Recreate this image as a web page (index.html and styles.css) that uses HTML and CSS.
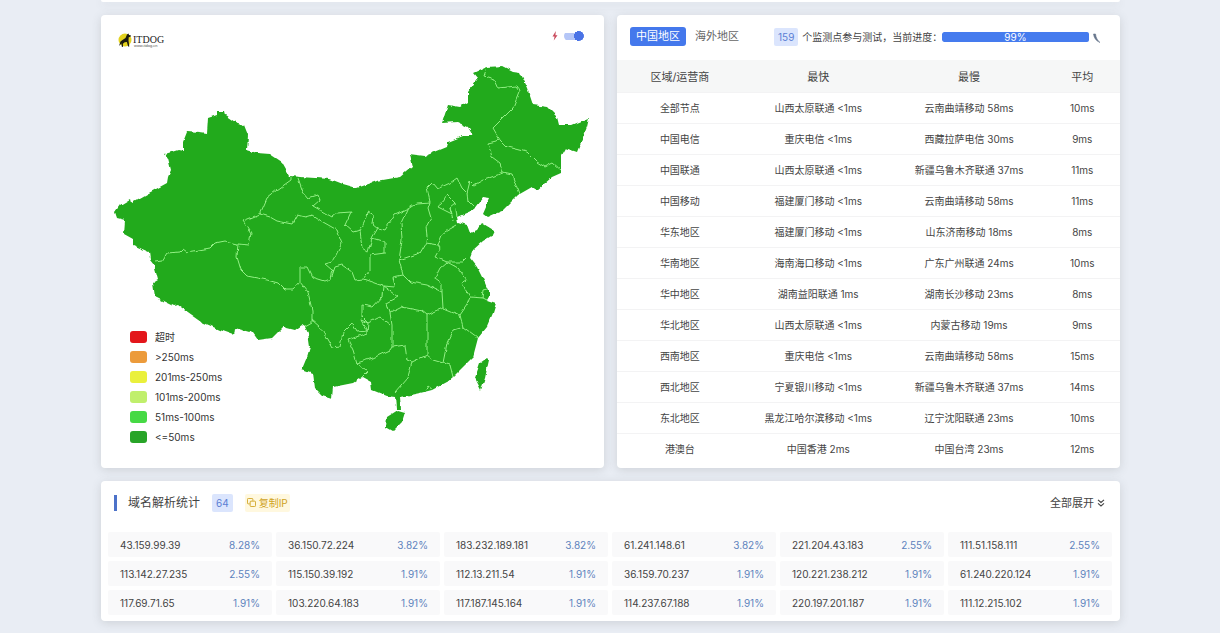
FILE: index.html
```html
<!DOCTYPE html>
<html lang="zh-CN">
<head>
<meta charset="utf-8">
<title>ITDOG</title>
<link rel="stylesheet" href="styles.css">
</head>
<body>
<main class="page">
  <section class="card card-prev"></section>

  <div class="columns">
    <section class="card map-card">
      <svg class="map" viewBox="101 15 503 453" role="img" aria-label="中国地图">
        <defs>
          <filter id="rough" x="-5%" y="-5%" width="110%" height="110%">
            <feTurbulence type="fractalNoise" baseFrequency="0.13" numOctaves="2" seed="4" result="n"/>
            <feDisplacementMap in="SourceGraphic" in2="n" scale="4" xChannelSelector="R" yChannelSelector="G"/>
          </filter>
        </defs>
        <g filter="url(#rough)">
          <path class="land" d="M115 212L120 205L130 199L131 203L147 194L167 183L168 177L171 170L168 158L165 154L178 150L183 151L183 142L187 132L200 133L207 134L208 118L217 115L217 111L224 111L225 115L235 122L244 125L248 135L247 150L257 153L270 154L282 162L290 176L300 177L330 179L343 184L357 188L377 181L400 177L412 167L409 154L425 156L447 147L448 142L463 136L473 136L468 127L457 122L442 123L448 105L460 107L468 102L468 92L478 78L474 73L487 67L503 66L513 71L520 72L527 87L533 105L547 107L557 117L559 125L572 125L589 118L587 127L577 152L565 148L561 155L561 173L552 177L537 190L532 187L518 195L503 210L498 212L487 217L483 214L490 198L483 197L473 210L457 217L458 222L467 225L470 233L477 230L482 223L495 231L493 235L483 241L473 250L470 258L477 267L485 283L490 295L487 300L496 303L493 313L487 327L478 338L473 357L453 377L447 382L432 390L420 393L400 397L401 409L396 409L395 397L387 396L372 390L371 382L362 377L353 383L333 387L332 398L322 395L315 388L313 373L302 369L307 357L310 347L308 333L305 327L302 325L295 330L283 327L272 338L258 340L253 333L235 328L234 335L220 330L202 322L178 305L173 306L155 297L153 283L158 280L154 265L150 260L149 252L133 245L133 239L124 234L125 220L117 218Z"/>
          <path class="land" d="M405 412L402 422L393 431L386 427L387 417L398 410Z"/>
          <path class="land" d="M487 358L489 360L485 378L481 390L475 378L480 363Z"/>
          <g class="borders">
            <path d="M155 262L162 261L167 253L180 252L183 249L187 252L210 248L215 243L225 241L238 244L237 257L241 270L247 276L267 280L278 283L285 290L293 290L300 282"/>
            <path d="M238 244L249 245L251 233L243 221L260 214L264 205L267 198L277 190L291 180L291 177"/>
            <path d="M260 214L270 217L277 221L292 224L297 215L305 217L312 215L323 222L337 230L342 243L335 257L332 262L325 264L332 270L330 279L325 281L312 277L307 267L300 267L300 282L308 292L312 310L312 323L305 327"/>
            <path d="M332 276L335 267L342 265L352 272L355 280L363 279"/>
            <path d="M298 178L303 192L308 198L318 195L320 200L313 206L332 217L337 213L351 212L345 225L353 232L360 230"/>
            <path d="M360 231L367 217L368 212L373 215L372 223L378 228L372 238L368 252L362 248Z"/>
            <path d="M372 238L385 242L385 253L370 255L370 270L363 279L383 286L395 287L393 277L403 275"/>
            <path d="M378 228L385 230L395 215L408 209L417 203L430 202M407 210L401 223L402 240L399 260L420 253L426 243L427 237L426 227L431 218L428 208L430 202"/>
            <path d="M430 202L427 188L432 183L437 189L450 183L457 178L462 188L467 193L470 181L474 185L483 180L503 173M467 193L468 202L473 207"/>
            <path d="M438 207L447 195L455 203L450 207L452 214L438 207M455 203L457 217M450 207L453 220"/>
            <path d="M457 225L443 233L438 245L426 243M438 245L440 248L435 257L447 262L463 262L468 257"/>
            <path d="M399 260L403 275L410 282L427 285L442 292M447 262L440 268L435 278L442 283L442 292L443 308"/>
            <path d="M447 262L458 268L467 280L462 283L470 297L483 298L487 300M487 289L483 290L482 298"/>
            <path d="M470 297L467 305L460 315L463 327L478 338M443 308L448 310L460 315M443 308L427 315L422 311L402 307L390 313"/>
            <path d="M383 286L398 297L387 303L390 313L392 325L392 347L405 345L407 360L412 362"/>
            <path d="M383 286L382 297L373 307L362 305L362 317L368 323L380 317L390 325"/>
            <path d="M427 315L427 327L427 347L427 355L412 362L408 378L395 393M427 355L433 360L443 363L447 343L453 330L463 327M443 363L450 365L453 377"/>
            <path d="M392 347L390 350L373 358L357 363L367 372L362 377M357 363L353 350L348 340L367 333L368 323"/>
            <path d="M312 320L320 327L332 348L340 347L343 332L352 323L357 332L367 331L361 320L368 323"/>
            <path d="M487 67L484 76L494 79L498 88L517 86L520 90L513 108L493 128L500 140L507 147L527 152L537 162L545 167L553 163L561 170"/>
            <path d="M500 140L488 143L492 157L500 163L503 173L512 175L515 183L519 194M425 391L428 386L432 389"/>
          </g>
        </g>
      </svg>

      <svg class="logo" viewBox="0 0 50 18" role="img" aria-label="ITDOG">
        <circle cx="7" cy="9" r="6.5" fill="#e3d21f"/>
        <path d="M1 15l1.500-4.500 2-1.500 3-2 1.500-3.500 1.500-1 .5 1.500 2 .5-.5 1.200-1.800.5-.2 3.300.8 6h-1.200l-1.200-4.500-2.200.2-1.800 1.500.2 3-1.200.2-.5-3.400z" fill="#1b1a10"/>
        <text class="logo-name" x="15" y="12">ITDOG</text>
        <text class="logo-sub" x="16" y="16">www.itdog.cn</text>
      </svg>

      <label class="switch" aria-label="快速模式">
        <svg class="bolt" viewBox="0 0 8 12"><path d="M5 0L1 6.500h2.500L2.500 11.500 7 5H4.500z" fill="#c94a5c"/></svg>
        <input class="switch-input" type="checkbox" checked>
      </label>

      <ul class="legend">
        <li><span class="swatch c-timeout"></span>超时</li>
        <li><span class="swatch c-slow"></span>&gt;250ms</li>
        <li><span class="swatch c-250"></span>201ms-250ms</li>
        <li><span class="swatch c-200"></span>101ms-200ms</li>
        <li><span class="swatch c-100"></span>51ms-100ms</li>
        <li><span class="swatch c-50"></span>&lt;=50ms</li>
      </ul>
    </section>

    <section class="card region-card">
      <header class="region-head">
        <button class="tab tab-active" type="button">中国地区</button>
        <button class="tab" type="button">海外地区</button>
        <span class="badge count">159</span>
        <span class="note">个监测点参与测试，当前进度：</span>
        <div class="progress" role="progressbar" aria-label="当前进度" aria-valuenow="99" aria-valuemin="0" aria-valuemax="100"><div class="progress-fill" style="width:99%">99%</div></div>
        <svg class="spinner" viewBox="0 0 10 12"><path d="M1.500 2C2 6 4 9 8 10.500 5.500 8.500 4 6 3.500 2z" fill="#66758c" stroke="#66758c" stroke-width=".6"/></svg>
      </header>
      <table class="regions">
        <thead><tr><th class="w-area">区域/运营商</th><th class="w-host">最快</th><th class="w-host">最慢</th><th class="w-avg">平均</th></tr></thead>
        <tbody>
          <tr><td>全部节点</td><td>山西太原联通 &lt;1ms</td><td>云南曲靖移动 58ms</td><td>10ms</td></tr>
          <tr><td>中国电信</td><td>重庆电信 &lt;1ms</td><td>西藏拉萨电信 30ms</td><td>9ms</td></tr>
          <tr><td>中国联通</td><td>山西太原联通 &lt;1ms</td><td>新疆乌鲁木齐联通 37ms</td><td>11ms</td></tr>
          <tr><td>中国移动</td><td>福建厦门移动 &lt;1ms</td><td>云南曲靖移动 58ms</td><td>11ms</td></tr>
          <tr><td>华东地区</td><td>福建厦门移动 &lt;1ms</td><td>山东济南移动 18ms</td><td>8ms</td></tr>
          <tr><td>华南地区</td><td>海南海口移动 &lt;1ms</td><td>广东广州联通 24ms</td><td>10ms</td></tr>
          <tr><td>华中地区</td><td>湖南益阳联通 1ms</td><td>湖南长沙移动 23ms</td><td>8ms</td></tr>
          <tr><td>华北地区</td><td>山西太原联通 &lt;1ms</td><td>内蒙古移动 19ms</td><td>9ms</td></tr>
          <tr><td>西南地区</td><td>重庆电信 &lt;1ms</td><td>云南曲靖移动 58ms</td><td>15ms</td></tr>
          <tr><td>西北地区</td><td>宁夏银川移动 &lt;1ms</td><td>新疆乌鲁木齐联通 37ms</td><td>14ms</td></tr>
          <tr><td>东北地区</td><td>黑龙江哈尔滨移动 &lt;1ms</td><td>辽宁沈阳联通 23ms</td><td>10ms</td></tr>
          <tr><td>港澳台</td><td>中国香港 2ms</td><td>中国台湾 23ms</td><td>12ms</td></tr>
        </tbody>
      </table>
    </section>
  </div>

  <section class="card dns-card">
    <header class="dns-head">
      <h2 class="dns-title">域名解析统计</h2>
      <span class="badge">64</span>
      <button class="copy" type="button"><svg class="copy-icon" viewBox="0 0 10 10"><path d="M3 6.500H1.500a1 1 0 0 1-1-1v-4a1 1 0 0 1 1-1h4a1 1 0 0 1 1 1V3M4.500 3.500h4a1 1 0 0 1 1 1v4a1 1 0 0 1-1 1h-4a1 1 0 0 1-1-1v-4a1 1 0 0 1 1-1z" fill="none" stroke="#cfa21c"/></svg>复制IP</button>
      <button class="expand" type="button">全部展开<svg class="chevrons" viewBox="0 0 8 8"><path d="M1 .8l3 2.700L7 .8M1 4.300L4 7l3-2.700" fill="none" stroke="#444" stroke-width="1.100"/></svg></button>
    </header>
    <ul class="ips">
      <li><span>43.159.99.39</span><b>8.28%</b></li>
      <li><span>36.150.72.224</span><b>3.82%</b></li>
      <li><span>183.232.189.181</span><b>3.82%</b></li>
      <li><span>61.241.148.61</span><b>3.82%</b></li>
      <li><span>221.204.43.183</span><b>2.55%</b></li>
      <li><span>111.51.158.111</span><b>2.55%</b></li>
      <li><span>113.142.27.235</span><b>2.55%</b></li>
      <li><span>115.150.39.192</span><b>1.91%</b></li>
      <li><span>112.13.211.54</span><b>1.91%</b></li>
      <li><span>36.159.70.237</span><b>1.91%</b></li>
      <li><span>120.221.238.212</span><b>1.91%</b></li>
      <li><span>61.240.220.124</span><b>1.91%</b></li>
      <li><span>117.69.71.65</span><b>1.91%</b></li>
      <li><span>103.220.64.183</span><b>1.91%</b></li>
      <li><span>117.187.145.164</span><b>1.91%</b></li>
      <li><span>114.237.67.188</span><b>1.91%</b></li>
      <li><span>220.197.201.187</span><b>1.91%</b></li>
      <li><span>111.12.215.102</span><b>1.91%</b></li>
    </ul>
  </section>
</main>
</body>
</html>
```
FILE: styles.css
```css
* { box-sizing: border-box; }

body {
  margin: 0;
  background: #e9edf4;
  color: #444;
  font: 10px/16px Inter, "Noto Sans CJK SC", sans-serif;
}

button {
  border: 0;
  background: none;
  color: inherit;
  font: inherit;
  padding: 0;
}

ul { list-style: none; margin: 0; padding: 0; }

.page {
  display: flex;
  flex-direction: column;
  gap: 13px;
  padding: 0 100px 12px 101px;
}

.card {
  background: #fff;
  border-radius: 4px;
  box-shadow: 0 2px 10px rgba(70, 75, 75, .17);
}

.card-prev { height: 2px; border-radius: 0 0 4px 4px; }

.columns {
  display: grid;
  grid-template-columns: 1fr 1fr;
  gap: 13px;
}

.map-card { position: relative; }
.map { display: block; width: 100%; height: 100%; }
.land { fill: #21aa1b; }
.borders { fill: none; stroke: #92f084; stroke-width: 1; stroke-linejoin: round; }

.logo { position: absolute; left: 17px; top: 16px; width: 50px; height: 18px; }
.logo-name { font: 10px "Liberation Serif", serif; fill: #222; }
.logo-sub { font: 4px "Liberation Sans", sans-serif; fill: #555; }

.switch {
  position: absolute;
  right: 20px;
  top: 16px;
  display: flex;
  align-items: center;
  gap: 5px;
}
.bolt { width: 8px; height: 10px; }
.switch-input {
  appearance: none;
  margin: 0;
  width: 20px;
  height: 10px;
  border-radius: 5px;
  background: radial-gradient(circle at 15px 5px, #4a73e6 5px, transparent 5px), linear-gradient(#b5c6f7, #b5c6f7) 0 50% / 18px 7px no-repeat;
}

.legend {
  position: absolute;
  left: 29px;
  bottom: 21px;
  color: #333;
}
.legend li { display: flex; align-items: center; gap: 8px; height: 20px; }
.swatch { width: 17px; height: 12px; border-radius: 3px; }
.c-timeout { background: #e3161b; }
.c-slow { background: #ec9b3b; }
.c-250 { background: #eaf03c; }
.c-200 { background: #c0ef6c; }
.c-100 { background: #46d945; }
.c-50 { background: #28a428; }

.region-head {
  display: flex;
  align-items: center;
  height: 45px;
  padding: 0 18px 2px 13px;
}
.tab { font-size: 11px; line-height: 19px; padding: 0 6px; border-radius: 3px; color: #666; margin-right: 3px; }
.tab-active { background: #4478ec; color: #fff; }
.badge {
  background: #dbe5fd;
  color: #5b7fd4;
  line-height: 18px;
  padding: 0 4px;
  border-radius: 2px;
}
.count { margin-left: 26px; }
.note { margin-left: 4px; white-space: nowrap; }
.progress { flex: 1; min-width: 0; height: 10px; border-radius: 2px; overflow: hidden; }
.progress-fill { background: #457bee; color: #fff; line-height: 10px; text-align: center; border-radius: 2px; }
.spinner { width: 10px; height: 12px; margin: 3px 0 0 2px; }

.regions { width: 100%; table-layout: fixed; border-collapse: collapse; text-align: center; }
.regions th { height: 32px; padding: 2px 0 0; background: #f6f7f7; font-size: 11px; font-weight: 400; }
.regions td { height: 31px; padding: 0; border-top: 1px solid #f3f3f4; white-space: nowrap; }
.w-area { width: 25%; }
.w-host { width: 30%; }
.w-avg { width: 15%; }
.region-card { padding-bottom: 4px; }

.dns-card { padding: 0 8px 6px 7px; }
.dns-head { display: flex; align-items: center; height: 43px; padding: 0 7px 0 6px; margin-bottom: 8px; }
.dns-title {
  margin: 0 12px 0 0;
  padding-left: 11px;
  border-left: 3px solid #4d72c9;
  font-size: 12px;
  font-weight: 400;
  line-height: 16px;
}
.copy {
  display: flex;
  align-items: center;
  gap: 3px;
  margin-left: 12px;
  padding: 0 2px;
  line-height: 18px;
  border-radius: 2px;
  background: #fff8df;
  color: #cfa21c;
}
.copy-icon { width: 9px; height: 9px; }
.expand { display: flex; align-items: center; gap: 3px; margin-left: auto; font-size: 11px; }
.chevrons { width: 8px; height: 8px; }

.ips {
  display: grid;
  grid-template-columns: repeat(6, 1fr);
  gap: 4px;
}
.ips li {
  display: flex;
  align-items: center;
  justify-content: space-between;
  height: 25px;
  padding: 0 12px;
  border-radius: 2px;
  background: #f9f9fa;
}
.ips b { font-weight: 400; color: #5d83bd; }
```
